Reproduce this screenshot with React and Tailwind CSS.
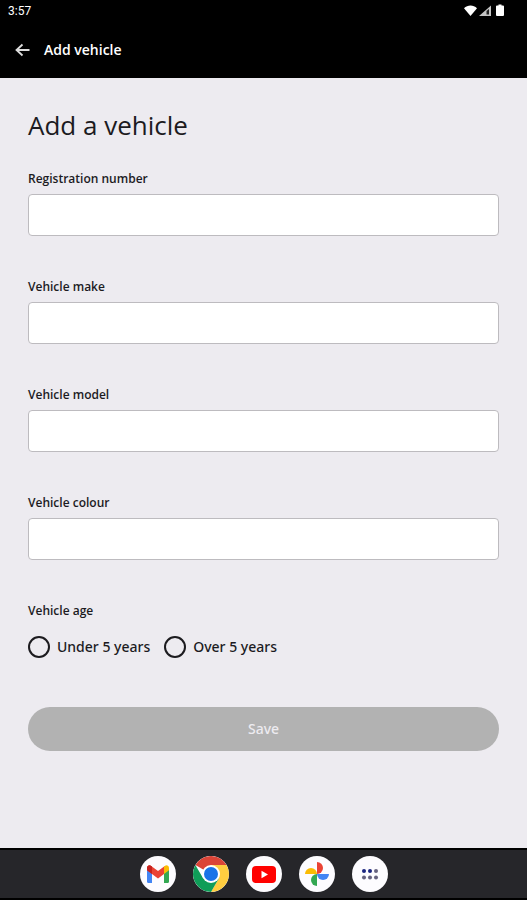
import React, { useState } from "react";

const fields = [
  { id: "registration", label: "Registration number" },
  { id: "make", label: "Vehicle make" },
  { id: "model", label: "Vehicle model" },
  { id: "colour", label: "Vehicle colour" },
];

const ages = [
  { value: "under5", label: "Under 5 years" },
  { value: "over5", label: "Over 5 years" },
];

const App = () => {
  const [vehicle, setVehicle] = useState({});

  const update = (key, value) => setVehicle({ ...vehicle, [key]: value });

  return (
    <div className="flex min-h-screen flex-col bg-[#edebf0] font-['Noto_Sans',sans-serif] text-[#1c1b1f]">
      <header className="bg-black text-white">
        <StatusBar />
        <div className="flex h-14 items-center gap-3 px-3.5">
          <button type="button" aria-label="Back">
            <BackArrow />
          </button>
          <span className="font-['Open_Sans',sans-serif] text-sm font-semibold">Add vehicle</span>
        </div>
      </header>

      <main className="flex-1 px-7 pt-7">
        <h1 className="mb-6 font-['Open_Sans',sans-serif] text-[26px] leading-[38px]">Add a vehicle</h1>

        <form onSubmit={(e) => e.preventDefault()}>
          {fields.map((field) => (
            <div key={field.id} className="mb-10 flex flex-col gap-1">
              <label htmlFor={field.id} className="font-['Open_Sans',sans-serif] text-xs leading-[22px] font-semibold">
                {field.label}
              </label>
              <input
                id={field.id}
                type="text"
                value={vehicle[field.id] || ""}
                onChange={(e) => update(field.id, e.target.value)}
                className="h-[42px] w-full rounded-sm border border-[#bdbbbf] bg-white px-3 text-sm"
              />
            </div>
          ))}

          <fieldset>
            <legend className="font-['Open_Sans',sans-serif] text-xs leading-[22px] font-semibold">
              Vehicle age
            </legend>
            <div className="mt-[13px] flex gap-3.5">
              {ages.map((age) => (
                <label key={age.value} className="flex items-center gap-[7px] text-sm leading-6 font-medium">
                  <input
                    type="radio"
                    name="age"
                    value={age.value}
                    checked={vehicle.age === age.value}
                    onChange={() => update("age", age.value)}
                    className="size-[22px] appearance-none rounded-full border-2 border-[#1c1b1f] checked:border-[7px]"
                  />
                  {age.label}
                </label>
              ))}
            </div>
          </fieldset>

          <button
            type="submit"
            className="mt-12 h-11 w-full rounded-full bg-[#b2b2b2] text-sm font-medium text-[#edebf0]"
          >
            Save
          </button>
        </form>
      </main>

      <Dock />
    </div>
  );
};

const StatusBar = () => (
  <div className="flex h-[22px] items-center justify-between pr-5 pl-2 font-[Roboto,sans-serif]">
    <span className="text-xs">3:57</span>
    <svg width="44" height="14" viewBox="0 0 44 14" fill="#fff" aria-hidden="true">
      <path d="M1 4.200C4.600.500 10.400.500 14 4.200L7.500 12Z" />
      <path d="M16 12 28 1.500V12Z" fill="#c4c4c4" />
      <path d="M23.500 7 26 5v5.500h-2.500Z" fill="#222" />
      <path d="M34 1.500h1.500V.500h3v1H40a1 1 0 0 1 1 1V11a1 1 0 0 1-1 1h-6a1 1 0 0 1-1-1V2.500a1 1 0 0 1 1-1Z" />
    </svg>
  </div>
);

const BackArrow = () => (
  <svg width="18" height="18" viewBox="0 0 18 18" fill="none" stroke="#ddd" strokeWidth="1.800">
    <path d="M15.500 9H2.500M8.500 3.500 2.500 9l6 5.500" />
  </svg>
);

const Dock = () => (
  <nav className="flex h-[52px] items-center justify-center gap-[17px] border-y-2 border-black bg-[#26262a]">
    <DockButton label="Gmail">
      <svg viewBox="0 0 36 36">
        <path d="M7 12v13.500a1.500 1.500 0 0 0 1.500 1.500H12V16Z" fill="#4285f4" />
        <path d="M29 12v13.500a1.500 1.500 0 0 1-1.500 1.500H24V16Z" fill="#34a853" />
        <path d="M7 12c0-2.500 2.500-3.500 4.200-2.100L18 15l6.800-5.100L24 18l-6 4.500-6-4.500-5-3.800Z" fill="#ea4335" />
        <path d="M7 12c0-2.500 2.500-3.500 4.200-2.100l.800.600V18l-5-3.800Z" fill="#c5221f" />
        <path d="M24 10.500V18l5-3.800V12c0-2.500-2.500-3.500-4.200-2.100Z" fill="#fbbc04" />
      </svg>
    </DockButton>
    <DockButton label="Chrome">
      <svg viewBox="0 0 36 36">
        <path d="M18 18 2.400 9A18 18 0 0 1 33.600 9Z" fill="#db4437" />
        <path d="M18 9h15.600A18 18 0 0 1 18 36l7.800-13.500Z" fill="#ffcd40" />
        <path d="M10.200 22.500 2.400 9A18 18 0 0 0 18 36l7.800-13.500Z" fill="#0f9d58" />
        <circle cx="18" cy="18" r="9" fill="#fff" />
        <circle cx="18" cy="18" r="7" fill="#1a73e8" />
      </svg>
    </DockButton>
    <DockButton label="YouTube">
      <svg viewBox="0 0 36 36">
        <rect x="6" y="10" width="24" height="17" rx="4" fill="#f00" />
        <path d="m15.500 14.800 6.500 3.700-6.500 3.700Z" fill="#fff" />
      </svg>
    </DockButton>
    <DockButton label="Photos">
      <svg viewBox="0 0 36 36">
        <path d="M18 6a6 6 0 0 1 0 12Z" fill="#ea4335" />
        <path d="M30 18a6 6 0 0 1-12 0Z" fill="#4285f4" />
        <path d="M18 30a6 6 0 0 1 0-12Z" fill="#34a853" />
        <path d="M6 18a6 6 0 0 1 12 0Z" fill="#fbbc04" />
      </svg>
    </DockButton>
    <DockButton label="All apps">
      <svg viewBox="0 0 36 36">
        <g fill="#1a2580">
          <circle cx="12" cy="15" r="2" />
          <circle cx="18" cy="15" r="2" />
        </g>
        <g fill="#66627f">
          <circle cx="24" cy="15" r="2" />
          <circle cx="12" cy="21.500" r="2" />
          <circle cx="18" cy="21.500" r="2" />
          <circle cx="24" cy="21.500" r="2" />
        </g>
      </svg>
    </DockButton>
  </nav>
);

const DockButton = ({ label, children }) => (
  <button type="button" aria-label={label} className="size-9 overflow-hidden rounded-full bg-[#fdfcff]">
    {children}
  </button>
);

export default App;
